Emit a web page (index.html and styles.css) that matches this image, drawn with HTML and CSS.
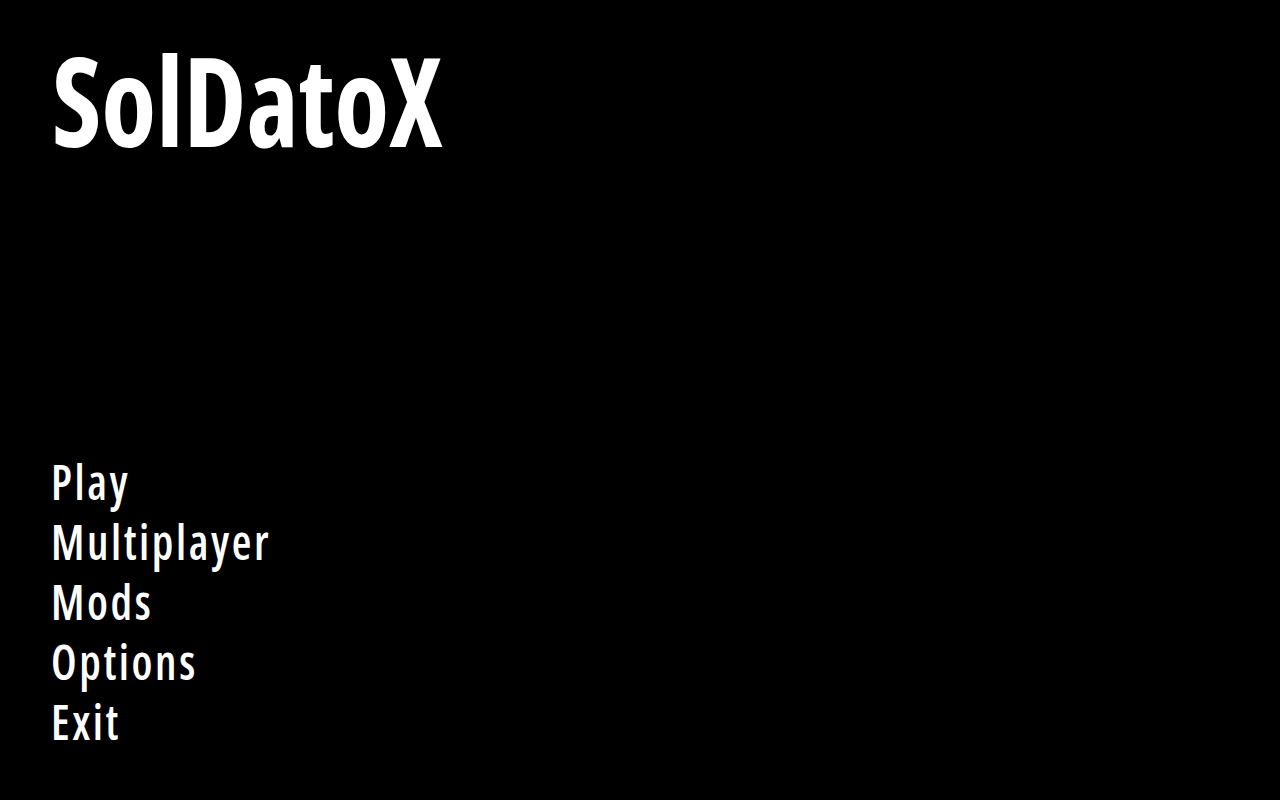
FILE: index.html
```html
<!DOCTYPE html>
<html lang="en">
<head>
<meta charset="utf-8">
<title>SolDatoX</title>
<link rel="stylesheet" href="styles.css">
</head>
<body>
<main class="screen">
  <h1 class="title">SolDatoX</h1>
  <nav class="menu">
    <a class="menu-item" href="#">Play</a>
    <a class="menu-item" href="#">Multiplayer</a>
    <a class="menu-item" href="#">Mods</a>
    <a class="menu-item" href="#">Options</a>
    <a class="menu-item" href="#">Exit</a>
  </nav>
</main>
</body>
</html>
```
FILE: styles.css
```css
html, body {
  margin: 0;
  padding: 0;
  background: #000;
  height: 100%;
}
.screen {
  display: flex;
  flex-direction: column;
  padding: 37px 0 0 51px;
  box-sizing: border-box;
  height: 100%;
  font-family: "Open Sans", "Liberation Sans", sans-serif;
  font-stretch: 75%;
  color: #fff;
}
.title {
  margin: 0 0 0 1px;
  font-size: 124px;
  line-height: 124px;
  font-weight: 700;
  transform: scaleX(0.908);
  transform-origin: left center;
  white-space: nowrap;
}
.menu {
  display: flex;
  flex-direction: column;
  align-items: flex-start;
  margin-top: 290px;
}
.menu-item {
  display: block;
  color: #fff;
  text-decoration: none;
  font-size: 49px;
  line-height: 60px;
  font-weight: 600;
  letter-spacing: 2.8px;
  transform: scaleX(0.92);
  transform-origin: left center;
}
```
